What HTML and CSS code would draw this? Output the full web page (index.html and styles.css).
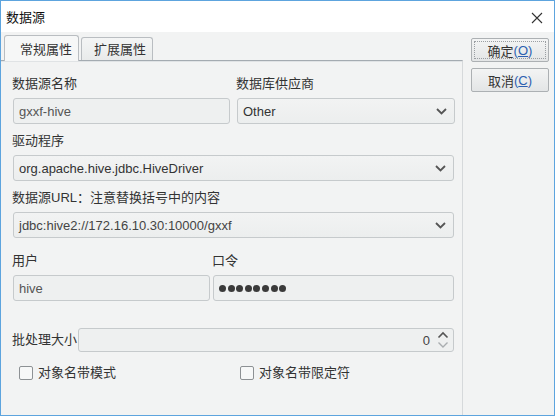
FILE: index.html
```html
<!DOCTYPE html>
<html>
<head>
<meta charset="utf-8">
<link rel="stylesheet" href="styles.css">
</head>
<body>
<div class="window">
  <div class="titlebar">
    <span class="title">数据源</span>
    <svg class="close" width="12" height="12" viewBox="0 0 12 12"><path d="M1 1 L11 11 M11 1 L1 11" stroke="#333" stroke-width="1.1" fill="none"/></svg>
  </div>
  <div class="content">
    <div class="main">
      <div class="tabs">
        <div class="tab active">常规属性</div>
        <div class="tab">扩展属性</div>
      </div>
      <div class="panel">
        <div class="row cols-a">
          <div class="field">
            <div class="label">数据源名称</div>
            <div class="box">gxxf-hive</div>
          </div>
          <div class="field">
            <div class="label">数据库供应商</div>
            <div class="box select"><span class="val dark">Other</span><svg class="chev" width="11" height="7" viewBox="0 0 11 7"><path d="M1 1 L5.5 5.5 L10 1" stroke="#555" stroke-width="1.8" fill="none"/></svg></div>
          </div>
        </div>
        <div class="field g2">
          <div class="label">驱动程序</div>
          <div class="box select"><span class="val dark">org.apache.hive.jdbc.HiveDriver</span><svg class="chev" width="11" height="7" viewBox="0 0 11 7"><path d="M1 1 L5.5 5.5 L10 1" stroke="#555" stroke-width="1.8" fill="none"/></svg></div>
        </div>
        <div class="field g3">
          <div class="label">数据源URL：注意替换括号中的内容</div>
          <div class="box select"><span class="val">jdbc:hive2://172.16.10.30:10000/gxxf</span><svg class="chev" width="11" height="7" viewBox="0 0 11 7"><path d="M1 1 L5.5 5.5 L10 1" stroke="#555" stroke-width="1.8" fill="none"/></svg></div>
        </div>
        <div class="row cols-b g4">
          <div class="field">
            <div class="label">用户</div>
            <div class="box">hive</div>
          </div>
          <div class="field">
            <div class="label">口令</div>
            <div class="box pw"><span class="dot"></span><span class="dot"></span><span class="dot"></span><span class="dot"></span><span class="dot"></span><span class="dot"></span><span class="dot"></span><span class="dot"></span></div>
          </div>
        </div>
        <div class="batch">
          <span class="blabel">批处理大小</span>
          <div class="box spin">
            <span class="num">0</span>
            <svg class="arrows" width="12" height="18" viewBox="0 0 12 18"><path d="M1.5 6.5 L6 2 L10.5 6.5" stroke="#555" stroke-width="1.6" fill="none"/><path d="M1.5 11.5 L6 16 L10.5 11.5" stroke="#a9adb0" stroke-width="1.4" fill="none"/></svg>
          </div>
        </div>
        <div class="checks">
          <label class="check c1"><span class="cb"></span>对象名带模式</label>
          <label class="check c2"><span class="cb"></span>对象名带限定符</label>
        </div>
      </div>
    </div>
    <div class="side">
      <div class="btn focus"><span class="inner">确定<span class="acc">(<u>O</u>)</span></span></div>
      <div class="btn"><span class="inner">取消<span class="acc">(<u>C</u>)</span></span></div>
    </div>
  </div>
</div>
</body>
</html>
```
FILE: styles.css
```css
html, body {
  margin: 0;
  padding: 0;
  background: #ffffff;
}
body {
  font-family: "Liberation Sans", "Noto Sans CJK SC", sans-serif;
  font-size: 13px;
  color: #333;
}
.window {
  width: 553px;
  height: 414px;
  border: 1px solid #5da4de;
  background: #f2f3f3;
  display: flex;
  flex-direction: column;
}
.titlebar {
  height: 31px;
  background: #ffffff;
  display: flex;
  align-items: center;
  justify-content: space-between;
  padding: 0 11px 0 5px;
  box-sizing: border-box;
}
.title {
  font-family: "Noto Sans CJK SC", sans-serif;
  font-size: 13px;
  color: #111;
  line-height: 18px;
  margin-top: 1px;
}
.close {
  display: block;
  margin-top: 2px;
}
.content {
  flex: 1;
  display: flex;
}
.main {
  width: 462px;
  display: flex;
  flex-direction: column;
}
.tabs {
  display: flex;
  align-items: flex-end;
  height: 27px;
  margin-top: 1px;
  padding-left: 3px;
  gap: 2px;
}
.tab {
  height: 23px;
  line-height: 22px;
  border: 1px solid #b9bdc1;
  border-bottom: none;
  border-radius: 3px 3px 0 0;
  background: linear-gradient(#f4f5f5, #e9ebeb);
  font-family: "Noto Sans CJK SC", sans-serif;
  color: #333;
  box-sizing: border-box;
  white-space: nowrap;
}
.tab.active {
  height: 26px;
  line-height: 25px;
  width: 75px;
  padding: 0 0 0 15px;
  background: #f6f7f7;
  margin-bottom: -1px;
  position: relative;
  z-index: 1;
}
.tab:not(.active) {
  width: 72px;
  padding: 0 0 0 12px;
}
.panel {
  flex: 1;
  border-top: 1px solid #a4abb1;
  border-right: 1px solid #d6d9db;
  box-shadow: inset 0 1px 0 #e0e3e5;
  padding: 14px 8px 0 11px;
}
.label {
  line-height: 18px;
  height: 18px;
  color: #333;
  white-space: nowrap;
}
.box {
  height: 26px;
  box-sizing: border-box;
  border: 1px solid #c6cacc;
  border-radius: 3px;
  background: #eef0f0;
  margin-top: 5px;
  margin-left: 1px;
  display: flex;
  align-items: center;
  padding-left: 5px;
  color: #555;
  white-space: nowrap;
}
.select {
  justify-content: space-between;
  padding-right: 7px;
  background: linear-gradient(#f2f3f3, #eceeee);
}
.val.dark {
  color: #333;
}
.val {
  color: #444;
}
.chev {
  display: block;
}
.row {
  display: grid;
}
.cols-a {
  grid-template-columns: 218px 219px;
  column-gap: 6px;
}
.cols-b {
  grid-template-columns: 198px 242px;
  column-gap: 2px;
}
.g2 {
  margin-top: 8px;
}
.g3 {
  margin-top: 8px;
}
.g4 {
  margin-top: 14px;
}
.pw {
  padding-left: 5px;
  gap: 1.6px;
}
.dot {
  width: 7px;
  height: 7px;
  border-radius: 50%;
  background: #3a3a3a;
  display: inline-block;
}
.batch {
  display: flex;
  align-items: center;
  margin-top: 27px;
}
.blabel {
  line-height: 18px;
  white-space: nowrap;
  width: 67px;
}
.spin {
  flex: none;
  width: 376px;
  height: 24px;
  margin: 0;
  justify-content: flex-end;
  padding-right: 4px;
}
.num {
  color: #444;
  margin-right: 7px;
}
.arrows {
  display: block;
}
.checks {
  height: 18px;
  margin-top: 12px;
  display: flex;
}
.check {
  display: flex;
  align-items: center;
  line-height: 18px;
  white-space: nowrap;
}
.c1 {
  margin-left: 7px;
  width: 221px;
}
.cb {
  width: 14px;
  height: 14px;
  box-sizing: border-box;
  border: 1px solid #8d9194;
  border-radius: 2px;
  background: #f7f8f8;
  margin-right: 5px;
}
.side {
  flex: 1;
  padding: 6px 0 0 8px;
  display: flex;
  flex-direction: column;
  gap: 6px;
}
.btn {
  width: 78px;
  height: 24px;
  box-sizing: border-box;
  border: 1px solid #acb0b3;
  border-radius: 2px;
  background: linear-gradient(#f3f4f4, #e3e5e6);
  display: flex;
  align-items: center;
  justify-content: center;
  padding: 2px;
}
.btn .inner {
  flex: 1;
  align-self: stretch;
  display: flex;
  align-items: center;
  justify-content: center;
  border: 1px dotted transparent;
  font-family: "Noto Sans CJK SC", sans-serif;
  color: #333;
}
.btn.focus .inner {
  border-color: #9a9ea2;
}
.acc {
  font-family: "Liberation Sans", sans-serif;
  color: #2c5fb0;
}
```
